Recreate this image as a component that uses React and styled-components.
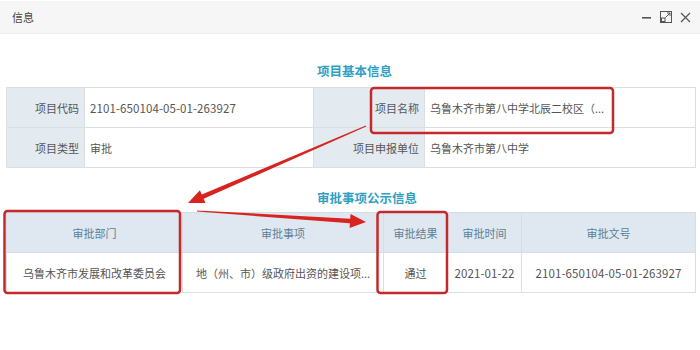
import React from 'react'
import styled, { createGlobalStyle } from 'styled-components'

const GlobalStyle = createGlobalStyle`
  html, body {
    margin: 0;
    padding: 0;
    background: #fff;
  }
  body {
    font-family: "Noto Sans CJK SC", "Noto Sans", sans-serif;
    color: #555;
  }
`

const Page = styled.div`
  position: relative;
  width: 700px;
  height: 350px;
  overflow: hidden;
  background: #fff;
`

const TitleBar = styled.div`
  margin-top: 1px;
  height: 32px;
  background: #f6f6f6;
  border-bottom: 1px solid #ededed;
  display: flex;
  align-items: center;
  justify-content: space-between;
  padding: 0 9px 0 12px;
`

const TitleText = styled.span`
  font-size: 11px;
  color: #444;
`

const WinButtons = styled.div`
  display: flex;
  align-items: center;
  gap: 8px;
  color: #555;
  svg { display: block; }
`

const Content = styled.div`
  padding: 0 5px 0 6px;
`

const SectionTitle = styled.div`
  margin-top: ${p => p.top}px;
  margin-bottom: ${p => p.bottom}px;
  height: 16px;
  line-height: 16px;
  padding-left: 311px;
  font-size: 12.5px;
  font-weight: bold;
  color: #2f9fc3;
  white-space: nowrap;
`

const Table = styled.table`
  width: 689px;
  border-collapse: collapse;
  table-layout: fixed;
  border: 1px solid #dadfe3;
`

const Cell = styled.td`
  height: 39px;
  padding: 0 5px;
  border: 1px solid #dadfe3;
  font-size: 11px;
  white-space: nowrap;
  overflow: hidden;
  color: #555;
  text-align: ${p => p.align || 'left'};
  background: ${p => (p.label ? '#e4ebf0' : '#fff')};
`

const Num = styled.span`
  font-size: 11.5px;
  letter-spacing: 0.1px;
`

const HeadCell = styled.th`
  height: 39px;
  padding: 0 5px;
  border: 1px solid #d5dee5;
  background: #dfe8f0;
  color: #5d7e97;
  font-size: 11px;
  font-weight: normal;
  text-align: center;
  white-space: nowrap;
`

const Overlay = styled.svg`
  position: absolute;
  left: 0;
  top: 0;
  pointer-events: none;
`

function arrowPoints(sx, sy, tx, ty, headLen = 16, headHalf = 7, tail = 0.6, neck = 2.3) {
  const dx = tx - sx
  const dy = ty - sy
  const len = Math.hypot(dx, dy)
  const ux = dx / len
  const uy = dy / len
  const nx = -uy
  const ny = ux
  const bx = tx - ux * headLen
  const by = ty - uy * headLen
  const pts = [
    [sx + nx * tail, sy + ny * tail],
    [bx + nx * neck, by + ny * neck],
    [bx + nx * headHalf, by + ny * headHalf],
    [tx, ty],
    [bx - nx * headHalf, by - ny * headHalf],
    [bx - nx * neck, by - ny * neck],
    [sx - nx * tail, sy - ny * tail],
  ]
  return pts.map(p => p.map(v => v.toFixed(1)).join(',')).join(' ')
}

function Annotations() {
  return (
    <Overlay width="700" height="350" viewBox="0 0 700 350">
      <g fill="none" stroke="#c5282b" strokeWidth="2.5">
        <rect x="371" y="88" width="242" height="45" rx="3" />
        <rect x="4.5" y="211" width="175.5" height="82" rx="3" />
        <rect x="377.5" y="212" width="69.5" height="81" rx="3" />
      </g>
      <g fill="#d8231f">
        <polygon points={arrowPoints(366, 126, 188, 203)} />
        <polygon points={arrowPoints(197, 211, 366, 222)} />
      </g>
    </Overlay>
  )
}

export default function App() {
  return (
    <Page>
      <GlobalStyle />
      <TitleBar>
        <TitleText>信息</TitleText>
        <WinButtons>
          <svg width="11" height="11" viewBox="0 0 11 11">
            <rect x="1" y="5" width="9" height="1.6" fill="#555" />
          </svg>
          <svg width="12" height="12" viewBox="0 0 12 12" fill="none" stroke="#555" strokeWidth="1">
            <rect x="0.5" y="0.5" width="11" height="11" />
            <rect x="1.5" y="7" width="3.5" height="3.5" />
            <path d="M5.5 6.5 L10 2 M7 2 H10 V5" />
          </svg>
          <svg width="11" height="11" viewBox="0 0 11 11" stroke="#555" strokeWidth="1.2">
            <path d="M1 1 L10 10 M10 1 L1 10" />
          </svg>
        </WinButtons>
      </TitleBar>
      <Content>
        <SectionTitle top={29} bottom={8}>项目基本信息</SectionTitle>
        <Table>
          <colgroup>
            <col style={{ width: 78 }} />
            <col style={{ width: 229 }} />
            <col style={{ width: 111 }} />
            <col style={{ width: 271 }} />
          </colgroup>
          <tbody>
            <tr>
              <Cell label align="right">项目代码</Cell>
              <Cell><Num>2101-650104-05-01-263927</Num></Cell>
              <Cell label align="right">项目名称</Cell>
              <Cell>乌鲁木齐市第八中学北辰二校区（...</Cell>
            </tr>
            <tr>
              <Cell label align="right">项目类型</Cell>
              <Cell>审批</Cell>
              <Cell label align="right">项目申报单位</Cell>
              <Cell>乌鲁木齐市第八中学</Cell>
            </tr>
          </tbody>
        </Table>
        <SectionTitle top={22} bottom={6}>审批事项公示信息</SectionTitle>
        <Table>
          <colgroup>
            <col style={{ width: 176 }} />
            <col style={{ width: 201 }} />
            <col style={{ width: 64 }} />
            <col style={{ width: 74 }} />
            <col style={{ width: 174 }} />
          </colgroup>
          <thead>
            <tr>
              <HeadCell>审批部门</HeadCell>
              <HeadCell>审批事项</HeadCell>
              <HeadCell>审批结果</HeadCell>
              <HeadCell>审批时间</HeadCell>
              <HeadCell>审批文号</HeadCell>
            </tr>
          </thead>
          <tbody>
            <tr>
              <Cell align="center">乌鲁木齐市发展和改革委员会</Cell>
              <Cell align="center">地（州、市）级政府出资的建设项...</Cell>
              <Cell align="center">通过</Cell>
              <Cell align="center"><Num>2021-01-22</Num></Cell>
              <Cell align="center"><Num>2101-650104-05-01-263927</Num></Cell>
            </tr>
          </tbody>
        </Table>
      </Content>
      <Annotations />
    </Page>
  )
}
